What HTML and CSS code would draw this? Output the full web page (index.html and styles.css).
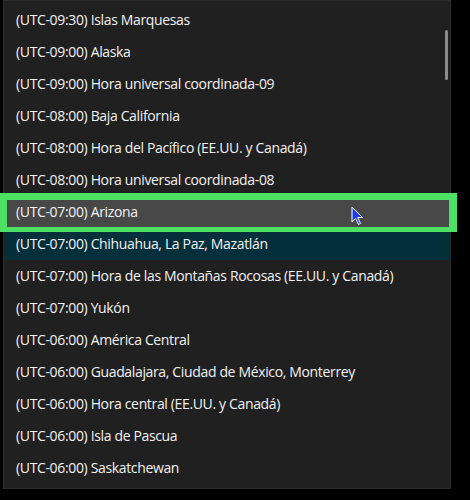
FILE: index.html
```html
<!DOCTYPE html>
<html lang="es">
<head>
<meta charset="utf-8">
<title>Zonas horarias</title>
<link rel="stylesheet" href="styles.css">
</head>
<body>
<div class="stage">
  <div class="panel">
    <ul class="list">
      <li class="item">(UTC-09:30) Islas Marquesas</li>
      <li class="item">(UTC-09:00) Alaska</li>
      <li class="item">(UTC-09:00) Hora universal coordinada-09</li>
      <li class="item">(UTC-08:00) Baja California</li>
      <li class="item">(UTC-08:00) Hora del Pacífico (EE.UU. y Canadá)</li>
      <li class="item">(UTC-08:00) Hora universal coordinada-08</li>
      <li class="item hover">(UTC-07:00) Arizona</li>
      <li class="item selected">(UTC-07:00) Chihuahua, La Paz, Mazatlán</li>
      <li class="item">(UTC-07:00) Hora de las Montañas Rocosas (EE.UU. y Canadá)</li>
      <li class="item">(UTC-07:00) Yukón</li>
      <li class="item">(UTC-06:00) América Central</li>
      <li class="item">(UTC-06:00) Guadalajara, Ciudad de México, Monterrey</li>
      <li class="item">(UTC-06:00) Hora central (EE.UU. y Canadá)</li>
      <li class="item">(UTC-06:00) Isla de Pascua</li>
      <li class="item">(UTC-06:00) Saskatchewan</li>
    </ul>
    <div class="scrollbar"></div>
  </div>
  <div class="highlight"></div>
  <svg class="cursor" width="14" height="20" viewBox="0 0 14 20">
    <path d="M1 1 L1 16 L4.5 12.5 L7.5 18.5 L9.5 17.5 L6.7 11.5 L11.5 11.5 Z" fill="#1d3cf5" stroke="#ffffff" stroke-width="1" stroke-linejoin="miter"/>
  </svg>
</div>
</body>
</html>
```

FILE: styles.css
```css
html, body {
  margin: 0;
  padding: 0;
  background: #000000;
}

body {
  width: 470px;
  height: 500px;
  overflow: hidden;
  font-family: "Open Sans", "Noto Sans", sans-serif;
}

.stage {
  position: relative;
  width: 470px;
  height: 500px;
}

.panel {
  position: relative;
  margin-left: 3px;
  width: 448px;
  height: 489px;
  box-sizing: border-box;
  background: #202020;
  border: 1px solid #2c2c2c;
  padding: 7px 1px 0 1px;
}

.list {
  list-style: none;
  margin: 0;
  padding: 0;
  display: flex;
  flex-direction: column;
  gap: 4px;
}

.item {
  height: 28px;
  line-height: 24px;
  padding-left: 11px;
  font-size: 14px;
  letter-spacing: -0.35px;
  color: #f2f2f2;
  white-space: nowrap;
}

.item.hover {
  background: #484848;
}

.item.selected {
  background: #062f3c;
}

.scrollbar {
  position: absolute;
  top: 29px;
  right: 2px;
  width: 3px;
  height: 50px;
  background: #8c8c8c;
  border-radius: 2px;
}

.highlight {
  position: absolute;
  left: 0;
  top: 193px;
  width: 457px;
  height: 39px;
  box-sizing: border-box;
  border-style: solid;
  border-color: #4ee064;
  border-width: 7px 8px 5px 7px;
}

.cursor {
  position: absolute;
  left: 351px;
  top: 206px;
}
```
